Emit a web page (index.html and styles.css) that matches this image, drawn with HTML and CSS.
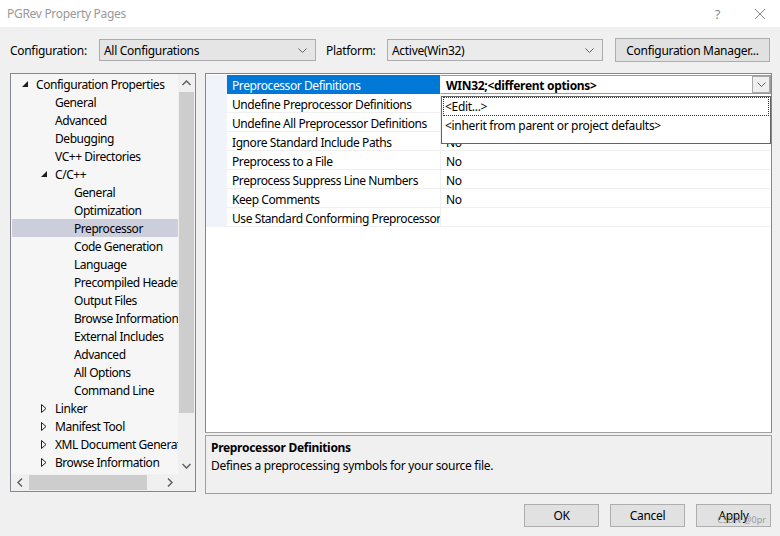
FILE: index.html
```html
<!DOCTYPE html>
<html>
<head>
<meta charset="utf-8">
<link rel="stylesheet" href="styles.css">
</head>
<body>
<div class="window">
  <div class="titlebar">
    <span class="title">PGRev Property Pages</span>
    <span class="tb-btns">
      <span class="tb-help">?</span>
      <svg class="tb-close" width="12" height="12" viewBox="0 0 12 12"><path d="M1 1 L11 11 M11 1 L1 11" stroke="#8a8a8a" stroke-width="1" fill="none"/></svg>
    </span>
  </div>

  <div class="config-row">
    <span class="lbl lbl-config">Configuration:</span>
    <div class="combo combo-config">
      <span>All Configurations</span>
      <svg class="chev" width="9" height="5" viewBox="0 0 9 5"><path d="M0.5 0.5 L4.5 4.5 L8.5 0.5" stroke="#606060" fill="none"/></svg>
    </div>
    <span class="lbl lbl-platform">Platform:</span>
    <div class="combo combo-platform">
      <span>Active(Win32)</span>
      <svg class="chev" width="9" height="5" viewBox="0 0 9 5"><path d="M0.5 0.5 L4.5 4.5 L8.5 0.5" stroke="#606060" fill="none"/></svg>
    </div>
    <div class="btn btn-cm">Configuration Manager...</div>
  </div>

  <div class="main">
    <div class="tree">
      <div class="tree-content">
        <div class="node l0"><svg class="tri" width="6" height="6" viewBox="0 0 6 6"><path d="M6 0 L6 6 L0 6 Z" fill="#1e1e1e"/></svg><span>Configuration Properties</span></div>
        <div class="node l1"><span>General</span></div>
        <div class="node l1"><span>Advanced</span></div>
        <div class="node l1"><span>Debugging</span></div>
        <div class="node l1"><span>VC++ Directories</span></div>
        <div class="node l1e"><svg class="tri" width="6" height="6" viewBox="0 0 6 6"><path d="M6 0 L6 6 L0 6 Z" fill="#1e1e1e"/></svg><span>C/C++</span></div>
        <div class="node l2"><span>General</span></div>
        <div class="node l2"><span>Optimization</span></div>
        <div class="node l2 selected"><span>Preprocessor</span></div>
        <div class="node l2"><span>Code Generation</span></div>
        <div class="node l2"><span>Language</span></div>
        <div class="node l2"><span>Precompiled Headers</span></div>
        <div class="node l2"><span>Output Files</span></div>
        <div class="node l2"><span>Browse Information</span></div>
        <div class="node l2"><span>External Includes</span></div>
        <div class="node l2"><span>Advanced</span></div>
        <div class="node l2"><span>All Options</span></div>
        <div class="node l2"><span>Command Line</span></div>
        <div class="node l1e"><svg class="tri" width="6" height="9" viewBox="0 0 6 9"><path d="M0.5 0.5 L5 4.5 L0.5 8.5 Z" fill="none" stroke="#1e1e1e"/></svg><span>Linker</span></div>
        <div class="node l1e"><svg class="tri" width="6" height="9" viewBox="0 0 6 9"><path d="M0.5 0.5 L5 4.5 L0.5 8.5 Z" fill="none" stroke="#1e1e1e"/></svg><span>Manifest Tool</span></div>
        <div class="node l1e"><svg class="tri" width="6" height="9" viewBox="0 0 6 9"><path d="M0.5 0.5 L5 4.5 L0.5 8.5 Z" fill="none" stroke="#1e1e1e"/></svg><span>XML Document Generator</span></div>
        <div class="node l1e"><svg class="tri" width="6" height="9" viewBox="0 0 6 9"><path d="M0.5 0.5 L5 4.5 L0.5 8.5 Z" fill="none" stroke="#1e1e1e"/></svg><span>Browse Information</span></div>
      </div>
      <div class="vscroll">
        <div class="sb-arrow"><svg width="9" height="6" viewBox="0 0 9 6"><path d="M0.5 5 L4.5 1 L8.5 5" stroke="#606060" stroke-width="1.5" fill="none"/></svg></div>
        <div class="vtrack"><div class="vthumb"></div></div>
        <div class="sb-arrow"><svg width="9" height="6" viewBox="0 0 9 6"><path d="M0.5 1 L4.5 5 L8.5 1" stroke="#606060" stroke-width="1.5" fill="none"/></svg></div>
      </div>
      <div class="hscroll">
        <div class="sb-arrow"><svg width="6" height="9" viewBox="0 0 6 9"><path d="M5 0.5 L1 4.5 L5 8.5" stroke="#606060" stroke-width="1.5" fill="none"/></svg></div>
        <div class="htrack"><div class="hthumb"></div></div>
        <div class="sb-arrow"><svg width="6" height="9" viewBox="0 0 6 9"><path d="M1 0.5 L5 4.5 L1 8.5" stroke="#606060" stroke-width="1.5" fill="none"/></svg></div>
      </div>
      <div class="corner"></div>
    </div>

    <div class="right">
      <div class="grid-panel">
        <div class="grid">
          <div class="row">
            <div class="margin"></div>
            <div class="name sel">Preprocessor Definitions</div>
            <div class="value editing">
              <span class="bold">WIN32;&lt;different options&gt;</span>
              <span class="dd-btn"><svg width="9" height="5" viewBox="0 0 9 5"><path d="M0.5 0.5 L4.5 4.5 L8.5 0.5" stroke="#606060" fill="none"/></svg></span>
            </div>
          </div>
          <div class="row"><div class="margin"></div><div class="name">Undefine Preprocessor Definitions</div><div class="value"></div></div>
          <div class="row"><div class="margin"></div><div class="name">Undefine All Preprocessor Definitions</div><div class="value"></div></div>
          <div class="row"><div class="margin"></div><div class="name">Ignore Standard Include Paths</div><div class="value">No</div></div>
          <div class="row"><div class="margin"></div><div class="name">Preprocess to a File</div><div class="value">No</div></div>
          <div class="row"><div class="margin"></div><div class="name">Preprocess Suppress Line Numbers</div><div class="value">No</div></div>
          <div class="row"><div class="margin"></div><div class="name">Keep Comments</div><div class="value">No</div></div>
          <div class="row"><div class="margin"></div><div class="name">Use Standard Conforming Preprocessor</div><div class="value"></div></div>
        </div>
        <div class="dropdown">
          <div class="dd-item focus">&lt;Edit...&gt;</div>
          <div class="dd-item">&lt;inherit from parent or project defaults&gt;</div>
        </div>
      </div>
      <div class="desc">
        <div class="desc-title">Preprocessor Definitions</div>
        <div class="desc-text">Defines a preprocessing symbols for your source file.</div>
      </div>
    </div>
  </div>

  <div class="buttons">
    <div class="btn btn-dlg">OK</div>
    <div class="btn btn-dlg">Cancel</div>
    <div class="btn btn-dlg btn-apply">Apply<span class="watermark">CSDN @0pr</span></div>
  </div>
</div>
</body>
</html>
```

FILE: styles.css
```css
* { box-sizing: border-box; }
html, body { margin: 0; padding: 0; }
body {
  width: 780px;
  height: 536px;
  overflow: hidden;
  background: #f0f0f0;
  font-family: "Segoe UI", "Noto Sans", "DejaVu Sans", sans-serif;
  font-size: 12px;
  letter-spacing: -0.3px;
  color: #000;
}
.window { width: 780px; height: 536px; display: flex; flex-direction: column; }

.titlebar {
  height: 27px;
  background: #fff;
  display: flex;
  align-items: center;
  justify-content: space-between;
  padding: 0 14px 0 7px;
}
.title { color: #999; font-size: 12px; }
.tb-btns { display: flex; align-items: center; gap: 34px; }
.tb-help { color: #8a8a8a; font-size: 13px; }

.config-row {
  display: flex;
  align-items: center;
  height: 26px;
  margin-top: 10px;
  padding-left: 10px;
}
.lbl { white-space: nowrap; }
.lbl-config { width: 89px; }
.lbl-platform { width: 61px; margin-left: 10px; }
.combo {
  height: 22px;
  border: 1px solid #acacac;
  background: #e5e5e5;
  display: flex;
  align-items: center;
  justify-content: space-between;
  padding: 0 8px 0 4px;
}
.combo-config { width: 217px; }
.combo-platform { width: 216px; background: #ebebeb; }
.btn {
  border: 1px solid #adadad;
  background: #e1e1e1;
  display: flex;
  align-items: center;
  justify-content: center;
  white-space: nowrap;
}
.btn-cm { width: 155px; height: 24px; margin-left: 12px; }

.main {
  display: flex;
  margin-top: 10px;
  padding-left: 10px;
  height: 421px;
}

.tree {
  width: 186px;
  height: 419px;
  border: 1px solid #828790;
  display: grid;
  grid-template-columns: 1fr 17px;
  grid-template-rows: 1fr 17px;
  background: #f6f6f6;
}
.tree-content {
  overflow: hidden;
  padding-top: 1px;
  padding-left: 1px;
  letter-spacing: -0.45px;
}
.node {
  height: 18px;
  display: flex;
  align-items: center;
  white-space: nowrap;
}
.node span { display: block; flex-shrink: 0; }
.node .tri { flex-shrink: 0; }
.node.l0 { padding-left: 10px; }
.node.l0 .tri { margin-right: 8px; }
.node.l1 { padding-left: 43px; }
.node.l1e { padding-left: 29px; }
.node.l1e .tri { margin-right: 8px; }
.node.l2 { padding-left: 62px; }
.node.selected { background: #cccedb; }

.vscroll {
  display: flex;
  flex-direction: column;
  background: #f0f0f0;
}
.sb-arrow {
  flex: 0 0 17px;
  height: 17px;
  display: flex;
  align-items: center;
  justify-content: center;
}
.hscroll .sb-arrow { width: 17px; }
.vtrack { flex: 1; }
.vthumb { margin-top: 1px; margin-left: 1px; width: 15px; height: 321px; background: #cdcdcd; }
.hscroll { display: flex; background: #f0f0f0; }
.htrack { flex: 1; }
.hthumb { margin-top: 1px; margin-left: 1px; height: 15px; width: 118px; background: #cdcdcd; }
.corner { background: #f0f0f0; }

.right {
  margin-left: 9px;
  width: 567px;
  display: flex;
  flex-direction: column;
}
.grid-panel {
  position: relative;
  height: 361px;
  border: 1px solid #828790;
  border-bottom-color: #a0a0a0;
  background: #fff;
}
.grid { padding-top: 1px; }
.row {
  display: flex;
  height: 19px;
}
.margin { width: 21px; background: #f0f4fa; }
.name {
  width: 213px;
  padding-left: 5px;
  padding-top: 2px;
  display: flex;
  align-items: center;
  border-bottom: 1px solid #f0f0f0;
  white-space: nowrap;
  overflow: hidden;
  letter-spacing: -0.42px;
}
.name.sel { background: #0078d7; color: #fff; border-bottom-color: #0078d7; }
.value {
  flex: 1;
  padding-left: 5px;
  padding-top: 2px;
  display: flex;
  align-items: center;
  border-bottom: 1px solid #f0f0f0;
  border-left: 1px solid #f0f0f0;
}
.value.editing {
  border: 1px solid #9a9a9a;
  border-left-color: #fff;
  justify-content: space-between;
  padding-right: 0;
  padding-top: 0;
  background: #fff;
}
.bold { font-weight: bold; padding-top: 1px; }
.dd-btn {
  width: 18px;
  height: 17px;
  border: 1px solid #a8a8a8;
  background: #efefef;
  display: flex;
  align-items: center;
  justify-content: center;
}
.dropdown {
  position: absolute;
  left: 235px;
  top: 22px;
  width: 330px;
  height: 48px;
  border: 1px solid #646464;
  background: #fff;
  padding: 0 1px;
}
.dd-item {
  height: 19px;
  display: flex;
  align-items: center;
  padding-left: 2px;
  white-space: nowrap;
}
.dd-item.focus { border: 1px dotted #333; padding-left: 1px; }

.desc {
  margin-top: 2px;
  height: 59px;
  border: 1px solid #a0a0a0;
  padding: 3px 5px 2px;
}
.desc-title { font-weight: bold; height: 18px; line-height: 18px; }
.desc-text { height: 18px; line-height: 18px; }

.buttons {
  display: flex;
  justify-content: flex-end;
  gap: 11px;
  margin-top: 10px;
  padding-right: 9px;
}
.btn-dlg { width: 75px; height: 23px; }
.btn-apply { position: relative; }
.watermark {
  position: absolute;
  right: 4px;
  bottom: 0px;
  font-size: 9px;
  letter-spacing: 0;
  color: rgba(140,140,140,0.85);
}
```
